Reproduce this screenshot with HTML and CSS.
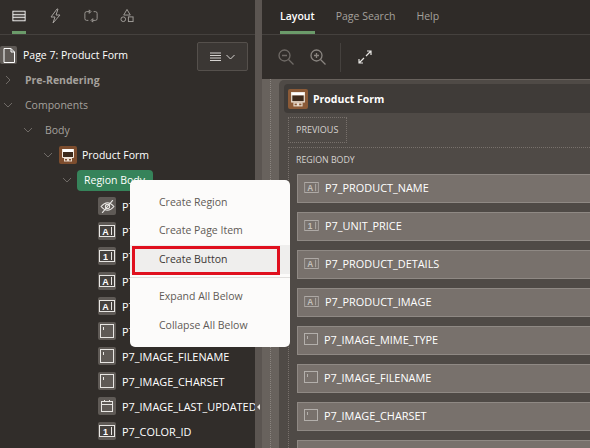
FILE: index.html
```html
<!DOCTYPE html>
<html lang="en">
<head>
    <meta charset="UTF-8">
    <title>Page Designer</title>
    <link rel="stylesheet" href="styles.css">
</head>
<body>
<svg class="defs" width="0" height="0">
    <symbol id="region" viewBox="0 0 14 14"><rect x="1" y="1" width="12" height="3" fill="#fff"/><rect x="1" y="4" width="12" height="5" fill="#3d2a1c"/><path d="M1.500 1v8.500h11V1" fill="none" stroke="#f3e9dd"/><rect x="3.500" y="10.500" width="3" height="2.500" fill="none" stroke="#e9dccf"/><rect x="7.500" y="10.500" width="3" height="2.500" fill="none" stroke="#e9dccf"/></symbol>
    <symbol id="field-frame" viewBox="0 0 16 12"><rect x=".5" y=".5" width="15" height="11" fill="#45413e" stroke="#e8e6e3"/><path d="M12.500 2v8" stroke="#e8e6e3"/></symbol>
    <symbol id="field-box" viewBox="0 0 14 14"><rect x=".5" y=".5" width="13" height="13" fill="none" stroke="#e8e6e3"/><path d="M3.500 3v3" stroke="#e8e6e3"/></symbol>
    <symbol id="card-frame" viewBox="0 0 16 12"><rect x=".5" y=".5" width="15" height="11" fill="none" stroke="#b3afab"/><path d="M12.500 2v8" stroke="#b3afab"/></symbol>
    <symbol id="card-box" viewBox="0 0 14 14"><rect x=".5" y=".5" width="13" height="11" fill="none" stroke="#b3afab"/><path d="M3.500 3v3" stroke="#b3afab"/></symbol>
</svg>

<div class="designer">

    <!-- left panel: tree -->
    <div class="left">
        <div class="tabs tabs-left">
            <span class="tab-icon active">
                <svg width="16" height="14" viewBox="0 0 16 14"><rect x="1" y="1.5" width="14" height="11" fill="#4a4643" stroke="#fff" stroke-width="1"/><path d="M1 5.5h14M1 8.500h14" stroke="#fff"/></svg>
            </span>
            <span class="tab-icon">
                <svg width="14" height="16" viewBox="0 0 14 16"><path d="M9 1 3 9h4l-2 6 7-8H8l2-6z" fill="none" stroke="#a5a19d"/></svg>
            </span>
            <span class="tab-icon">
                <svg width="16" height="14" viewBox="0 0 16 14"><path d="M6 2H3a2 2 0 0 0-2 2v6a2 2 0 0 0 2 2h2M10 12h3a2 2 0 0 0 2-2V4a2 2 0 0 0-2-2h-2M6 0v4l2-2zM10 10v4l-2-2z" fill="none" stroke="#a5a19d"/></svg>
            </span>
            <span class="tab-icon">
                <svg width="15" height="15" viewBox="0 0 15 15"><path d="M7.500 1 11 7H4z" fill="none" stroke="#a5a19d"/><circle cx="3.500" cy="11.500" r="2.500" fill="none" stroke="#a5a19d"/><rect x="9" y="9" width="5" height="5" fill="none" stroke="#a5a19d"/></svg>
            </span>
        </div>

        <div class="page-row">
            <span class="page-icon">
                <svg width="12" height="15" viewBox="0 0 12 15"><path d="M1 .5h7l3.500 3.500v10.500H1z" fill="none" stroke="#fff"/><path d="M8 .5V4h3.500" fill="none" stroke="#fff"/></svg>
            </span>
            <span class="page-title">Page 7: Product Form</span>
            <button class="menu-btn">
                <svg width="11" height="10" viewBox="0 0 11 10"><path d="M0 1h11M0 3.500h11M0 6h11M0 8.500h11" stroke="#d6d3d0" stroke-width="1"/></svg>
                <svg class="chev" width="9" height="6" viewBox="0 0 9 6"><path d="M.5 1 4.500 5l4-4" fill="none" stroke="#d6d3d0"/></svg>
            </button>
        </div>

        <div class="tree">
            <div class="node lvl0 muted bold"><svg class="tog" width="10" height="10" viewBox="0 0 10 10"><path d="M3 1l4 4-4 4" fill="none" stroke="#6f6a66"/></svg>Pre-Rendering</div>
            <div class="node lvl0 muted"><svg class="tog" width="10" height="10" viewBox="0 0 10 10"><path d="M1 3l4 4 4-4" fill="none" stroke="#6f6a66"/></svg>Components</div>
            <div class="node lvl1 muted"><svg class="tog" width="10" height="10" viewBox="0 0 10 10"><path d="M1 3l4 4 4-4" fill="none" stroke="#6f6a66"/></svg>Body</div>
            <div class="node lvl2"><svg class="tog" width="10" height="10" viewBox="0 0 10 10"><path d="M1 3l4 4 4-4" fill="none" stroke="#6f6a66"/></svg>
                <span class="region-icon"><svg width="14" height="14" viewBox="0 0 14 14"><use href="#region"/></svg></span>Product Form</div>
            <div class="node lvl3"><svg class="tog" width="10" height="10" viewBox="0 0 10 10"><path d="M1 3l4 4 4-4" fill="none" stroke="#6f6a66"/></svg><span class="pill">Region Body</span></div>
            <div class="node item">
                <span class="item-icon"><svg width="15" height="13" viewBox="0 0 14 12"><path d="M1 6q6-7 12 0q-6 7-12 0z" fill="none" stroke="#e8e6e3"/><circle cx="7" cy="6" r="2" fill="none" stroke="#e8e6e3"/><path d="M12 0 2 12" stroke="#e8e6e3"/></svg></span>P7_PRODUCT_NAME_HIDDEN</div>
            <div class="node item"><span class="item-icon"><svg class="fi" viewBox="0 0 16 12"><use href="#field-frame"/><text class="glyph" x="6.500" y="9.500" fill="#fff">A</text></svg></span>P7_PRODUCT_NAME</div>
            <div class="node item"><span class="item-icon"><svg class="fi" viewBox="0 0 16 12"><use href="#field-frame"/><text class="glyph" x="6.500" y="9.500" fill="#fff">1</text></svg></span>P7_UNIT_PRICE</div>
            <div class="node item"><span class="item-icon"><svg class="fi" viewBox="0 0 16 12"><use href="#field-frame"/><text class="glyph" x="6.500" y="9.500" fill="#fff">A</text></svg></span>P7_PRODUCT_DETAILS</div>
            <div class="node item"><span class="item-icon"><svg class="fi" viewBox="0 0 16 12"><use href="#field-frame"/><text class="glyph" x="6.500" y="9.500" fill="#fff">A</text></svg></span>P7_PRODUCT_IMAGE</div>
            <div class="node item"><span class="item-icon"><svg class="fb" viewBox="0 0 14 14"><use href="#field-box"/></svg></span>P7_IMAGE_MIME_TYPE</div>
            <div class="node item"><span class="item-icon"><svg class="fb" viewBox="0 0 14 14"><use href="#field-box"/></svg></span>P7_IMAGE_FILENAME</div>
            <div class="node item"><span class="item-icon"><svg class="fb" viewBox="0 0 14 14"><use href="#field-box"/></svg></span>P7_IMAGE_CHARSET</div>
            <div class="node item"><span class="item-icon"><svg width="14" height="14" viewBox="0 0 14 14"><rect x="1.500" y="2.500" width="11" height="10" fill="none" stroke="#e8e6e3"/><path d="M1.500 5.500h11M4.500 1v2M9.500 1v2" stroke="#e8e6e3"/></svg></span>P7_IMAGE_LAST_UPDATED</div>
            <div class="node item"><span class="item-icon"><svg class="fi" viewBox="0 0 16 12"><use href="#field-frame"/><text class="glyph" x="6.500" y="9.500" fill="#fff">1</text></svg></span>P7_COLOR_ID</div>
        </div>
    </div>

    <!-- splitter -->
    <div class="splitter"><span class="grip"></span></div>

    <!-- right panel: layout -->
    <div class="right">
        <div class="tabs tabs-right">
            <span class="tab active">Layout</span>
            <span class="tab">Page Search</span>
            <span class="tab">Help</span>
        </div>
        <div class="toolbar">
            <svg width="16" height="16" viewBox="0 0 16 16"><circle cx="6.500" cy="6.500" r="5.500" fill="none" stroke="#6f6a66" stroke-width="1.300"/><path d="M4 6.500h5M10.500 10.500l5 5" stroke="#6f6a66" stroke-width="1.300"/></svg>
            <svg width="16" height="16" viewBox="0 0 16 16"><circle cx="6.500" cy="6.500" r="5.500" fill="none" stroke="#8a8580" stroke-width="1.300"/><path d="M4 6.500h5M6.500 4v5M10.500 10.500l5 5" stroke="#8a8580" stroke-width="1.300"/></svg>
            <span class="tool-sep"></span>
            <svg width="14" height="14" viewBox="0 0 14 14"><path d="M8 6l5-5M9 1h4v4M6 8l-5 5M1 9v4h4" fill="none" stroke="#e8e6e3" stroke-width="1.200"/></svg>
        </div>
        <div class="canvas">
            <div class="gutter"></div>
            <div class="region">
                <div class="region-head">
                    <span class="region-icon big"><svg width="16" height="16" viewBox="0 0 14 14"><use href="#region"/></svg></span>
                    Product Form
                </div>
                <div class="slot">PREVIOUS</div>
                <div class="body-slot">
                    <div class="body-label">REGION BODY</div>
                    <div class="card"><svg class="ci" viewBox="0 0 16 12"><use href="#card-frame"/><text class="glyph" x="6.500" y="9.500" fill="#c4c0bc">A</text></svg>P7_PRODUCT_NAME</div>
                    <div class="card"><svg class="ci" viewBox="0 0 16 12"><use href="#card-frame"/><text class="glyph" x="6.500" y="9.500" fill="#c4c0bc">1</text></svg>P7_UNIT_PRICE</div>
                    <div class="card"><svg class="ci" viewBox="0 0 16 12"><use href="#card-frame"/><text class="glyph" x="6.500" y="9.500" fill="#c4c0bc">A</text></svg>P7_PRODUCT_DETAILS</div>
                    <div class="card"><svg class="ci" viewBox="0 0 16 12"><use href="#card-frame"/><text class="glyph" x="6.500" y="9.500" fill="#c4c0bc">A</text></svg>P7_PRODUCT_IMAGE</div>
                    <div class="card"><svg class="cb" viewBox="0 0 14 14"><use href="#card-box"/></svg>P7_IMAGE_MIME_TYPE</div>
                    <div class="card"><svg class="cb" viewBox="0 0 14 14"><use href="#card-box"/></svg>P7_IMAGE_FILENAME</div>
                    <div class="card"><svg class="cb" viewBox="0 0 14 14"><use href="#card-box"/></svg>P7_IMAGE_CHARSET</div>
                    <div class="card"></div>
                </div>
            </div>
        </div>
    </div>

    <!-- context menu -->
    <div class="menu">
        <div class="menu-item">Create Region</div>
        <div class="menu-item">Create Page Item</div>
        <div class="menu-item hot">Create Button</div>
        <div class="menu-line"></div>
        <div class="menu-item">Expand All Below</div>
        <div class="menu-item">Collapse All Below</div>
    </div>
    <span class="hilite"></span>
</div>
</body>
</html>
```

FILE: styles.css
```css
* {
    box-sizing: border-box;
}

html, body {
    margin: 0;
    height: 100%;
    overflow: hidden;
}

body {
    font-family: "Open Sans", "Liberation Sans", sans-serif;
    font-size: 10.5px;
    color: #fff;
    background-color: #312d2a;
}

.designer {
    position: relative;
    display: flex;
    width: 590px;
    height: 448px;
    overflow: hidden;
}

.defs {
    position: absolute;
}

.glyph {
    font-family: "Liberation Sans", sans-serif;
    font-size: 9px;
    font-weight: 700;
    text-anchor: middle;
}

/* left panel */
.left {
    width: 255px;
    flex: none;
    overflow: hidden;
}

.tabs {
    display: flex;
    height: 35px;
    border-bottom: 1px solid #45413e;
}

.tabs-left {
    padding-left: 12px;
    gap: 22px;
}

.tab-icon {
    width: 14px;
    height: 34px;
    display: flex;
    align-items: center;
    justify-content: center;
    padding-bottom: 3px;
    position: relative;
    flex: none;
}

.tab-icon.active::after {
    content: "";
    position: absolute;
    left: 0;
    bottom: 0;
    width: 14px;
    height: 3px;
    background-color: #6b9b6a;
}

.page-row {
    display: flex;
    align-items: center;
    height: 33px;
    padding-top: 7px;
}

.page-icon {
    width: 17px;
    height: 18px;
    background-color: #5f5a56;
    border-radius: 2px;
    display: flex;
    align-items: center;
    justify-content: center;
    flex: none;
}

.page-title {
    margin-left: 6px;
    font-weight: 500;
    width: 174px;
}

.menu-btn {
    width: 51px;
    height: 29px;
    align-self: flex-start;
    background-color: #3b3734;
    border: 1px solid #55504c;
    border-radius: 2px;
    padding: 0;
    display: flex;
    align-items: center;
    justify-content: center;
    gap: 5px;
    position: relative;
    z-index: 1;
    flex: none;
}

.node {
    height: 25px;
    display: flex;
    align-items: center;
    white-space: nowrap;
    font-weight: 500;
}

.muted {
    color: #a5a19d;
    font-weight: 400;
}

.bold {
    font-weight: 700;
}

.tog {
    flex: none;
    margin-right: 12px;
}

.lvl0, .lvl1, .lvl2, .lvl3 {
    padding-bottom: 1px;
}

.lvl0 {
    padding-left: 3px;
}

.lvl1 {
    padding-left: 23px;
}

.lvl2 {
    padding-left: 43px;
}

.lvl2 .tog {
    margin-right: 6px;
}

.lvl3 {
    padding-left: 62px;
}

.lvl3 .tog {
    margin-right: 5px;
}

.region-icon {
    width: 18px;
    height: 18px;
    background-color: #7d4d2e;
    border-radius: 2px;
    display: flex;
    align-items: center;
    justify-content: center;
    margin-right: 5px;
    flex: none;
}

.region-icon.big {
    width: 20px;
    height: 20px;
    background-color: #8b5a37;
    margin: 0 5px 0 0;
}

.pill {
    background-color: #36835a;
    height: 21px;
    line-height: 20px;
    width: 76px;
    padding-left: 7px;
    border-radius: 4px;
}

.item {
    padding-left: 98px;
    padding-top: 1px;
    font-size: 10.9px;
}

.item-icon {
    width: 18px;
    height: 18px;
    border-radius: 2px;
    background-color: #5f5a56;
    display: flex;
    align-items: center;
    justify-content: center;
    margin-right: 6px;
    flex: none;
}

.fi {
    width: 16px;
    height: 12px;
}

.fb {
    width: 14px;
    height: 14px;
}

/* splitter */
.splitter {
    width: 7px;
    flex: none;
    background-color: #5b5551;
    position: relative;
}

.grip {
    position: absolute;
    left: 2px;
    top: 404px;
    width: 0;
    height: 0;
    border-top: 3px solid transparent;
    border-bottom: 3px solid transparent;
    border-right: 3px solid #e8e6e3;
}

/* right panel */
.right {
    flex: 1;
    min-width: 0;
    display: flex;
    flex-direction: column;
}

.tabs-right {
    background-color: #2f2b28;
    padding-left: 18px;
    gap: 21px;
}

.tab {
    height: 34px;
    line-height: 32px;
    color: #a5a19d;
    position: relative;
}

.tab.active {
    color: #fff;
    font-weight: 600;
}

.tab.active::after {
    content: "";
    position: absolute;
    left: 0;
    right: 0;
    bottom: 0;
    height: 3px;
    background-color: #6b9b6a;
}

.toolbar {
    height: 44px;
    flex: none;
    display: flex;
    align-items: center;
    padding-left: 16px;
    gap: 16px;
}

.tool-sep {
    width: 1px;
    height: 29px;
    background-color: #45413e;
    margin-left: -2px;
    margin-right: 1px;
}

.canvas {
    flex: 1;
    display: flex;
    background-color: #68625d;
    min-height: 0;
}

.gutter {
    width: 9px;
    margin-left: 8px;
    flex: none;
    border-left: 1px dotted #8a847f;
}

.region {
    flex: 1;
    min-width: 0;
    margin-top: 1px;
    padding: 4px 0 0 5px;
    background-color: #4f4a46;
    border-top-left-radius: 5px;
}

.region-head {
    height: 29px;
    background-color: #3f3b38;
    display: flex;
    align-items: center;
    padding-left: 4px;
    font-weight: 700;
    border-radius: 4px 0 0 4px;
}

.slot {
    width: 59px;
    height: 26px;
    margin: 4px 0 4px 4px;
    border: 1px dotted #78716c;
    font-size: 9px;
    font-weight: 500;
    color: #d6d3d0;
    line-height: 24px;
    padding-left: 7px;
}

.body-slot {
    margin-left: 4px;
    border: 1px dotted #78716c;
    border-right: 0;
    padding: 0 0 0 8px;
}

.body-label {
    height: 17px;
    line-height: 24px;
    font-size: 8.8px;
    font-weight: 500;
    color: #d6d3d0;
    margin-left: -1px;
}

.card {
    height: 29px;
    margin-top: 9px;
    padding-bottom: 2px;
    background-color: #78716c;
    border: 1px solid #8f8984;
    border-right: 0;
    display: flex;
    align-items: center;
    padding-left: 6px;
    font-size: 10.9px;
    font-weight: 500;
    white-space: nowrap;
}

.ci {
    width: 15px;
    height: 11px;
    margin-right: 6px;
    flex: none;
}

.cb {
    width: 14px;
    height: 14px;
    margin-right: 6px;
    flex: none;
}

/* context menu */
.menu {
    position: absolute;
    left: 130px;
    top: 180px;
    width: 160px;
    height: 167px;
    background-color: #fcfbfa;
    border-radius: 5px;
    padding-top: 7px;
}

.menu-item {
    height: 29px;
    line-height: 28px;
    padding-left: 29px;
    color: #5f5a56;
}

.menu-item:first-child {
    line-height: 30px;
}

.menu-item.hot {
    background-color: #efeeed;
    color: #3b3734;
}

.menu-line {
    height: 1px;
    background-color: #e0dedc;
    margin: 3px 0 4px;
}

.hilite {
    position: absolute;
    left: 132px;
    top: 246px;
    width: 148px;
    height: 29px;
    border: 3px solid #e0101e;
}
```
